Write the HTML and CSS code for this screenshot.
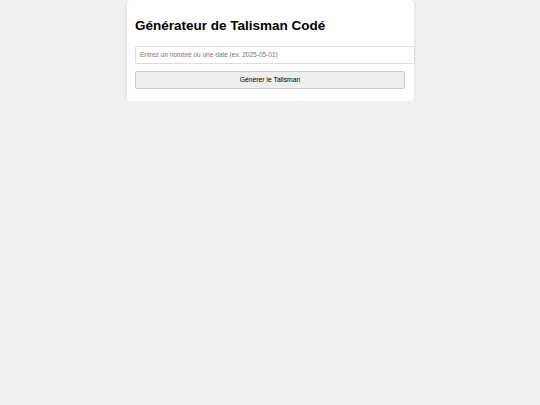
FILE: index.html
```html
<!DOCTYPE html>
<html lang="fr">
<head>
    <meta charset="UTF-8">
    <meta name="viewport" content="width=device-width, initial-scale=1.0">
    <title>Générateur de Talisman Codé</title>
    <link rel="stylesheet" href="styles.css">
</head>
<body>

    <!-- Carte principale -->
    <div class="container">
        <h1>Générateur de Talisman Codé</h1>
        <input type="text" id="code-input" placeholder="Entrez un nombre ou une date (ex. 2025-05-01)">
        <button onclick="genererTalisman()">Générer le Talisman</button>
        <div id="resultat"></div>
    </div>

    <script>
        function genererTalisman() {
            let valeur = document.getElementById('code-input').value;
            if (!valeur) {
                return;
            }
            document.getElementById('resultat').textContent = valeur;
        }
    </script>

</body>
</html>
```

FILE: styles.css
```css
body {
    font-family: "Liberation Sans", Arial, sans-serif;
    margin: 0;
    background-color: #f0f0f0;
}
.container {
    width: 270px;
    margin: 0 auto;
    padding: 8.5px 8.5px 12px;
    background: white;
    border-radius: 4px;
    box-shadow: 0px 0px 4px rgba(0, 0, 0, 0.1);
}
h1 {
    font-size: 13.5px;
    margin: 9px 0 13px;
}
input {
    display: block;
    width: 100%;
    height: 8px;
    padding: 4px;
    margin: 0 0 7px;
    font-size: 6.5px;
    font-family: inherit;
    border: 1px solid #ddd;
    border-radius: 2px;
}
button {
    display: block;
    box-sizing: border-box;
    width: 100%;
    height: 18px;
    padding: 4px;
    margin: 0;
    font-size: 6.75px;
    font-family: inherit;
    color: black;
    background: #eee;
    border: 1px solid #ccc;
    border-radius: 2px;
    cursor: pointer;
}
```
